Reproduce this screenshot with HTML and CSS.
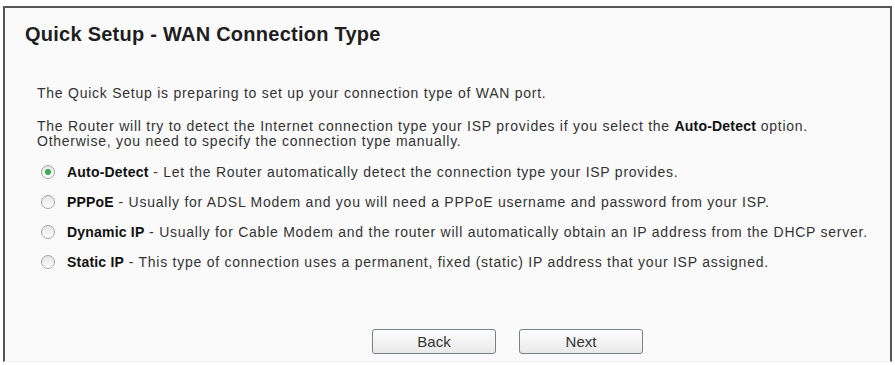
FILE: index.html
```html
<!DOCTYPE html>
<html lang="en">
<head>
    <meta charset="UTF-8">
    <title>Quick Setup - WAN Connection Type</title>
    <link rel="stylesheet" href="styles.css">
</head>
<body>
    <div class="panel">
        <h1 class="title">Quick Setup - WAN Connection Type</h1>

        <div class="content">
            <p class="intro">The Quick Setup is preparing to set up your connection type of WAN port.</p>
            <p class="info">The Router will try to detect the Internet connection type your ISP provides if you select the <b>Auto-Detect</b> option.<br>
            Otherwise, you need to specify the connection type manually.</p>

            <div class="options">
                <label class="option">
                    <input type="radio" name="wan" checked>
                    <span class="dot"></span>
                    <span><b>Auto-Detect</b> - Let the Router automatically detect the connection type your ISP provides.</span>
                </label>
                <label class="option">
                    <input type="radio" name="wan">
                    <span class="dot"></span>
                    <span><b>PPPoE</b> - Usually for ADSL Modem and you will need a PPPoE username and password from your ISP.</span>
                </label>
                <label class="option">
                    <input type="radio" name="wan">
                    <span class="dot"></span>
                    <span><b>Dynamic IP</b> - Usually for Cable Modem and the router will automatically obtain an IP address from the DHCP server.</span>
                </label>
                <label class="option">
                    <input type="radio" name="wan">
                    <span class="dot"></span>
                    <span><b>Static IP</b> - This type of connection uses a permanent, fixed (static) IP address that your ISP assigned.</span>
                </label>
            </div>

            <div class="actions">
                <button type="button">Back</button>
                <button type="button">Next</button>
            </div>
        </div>
    </div>
</body>
</html>
```

FILE: styles.css
```css
body {
    margin: 0;
    padding: 6px 3px 3px 3px;
    background: #ffffff;
    font-family: "Liberation Sans", Arial, sans-serif;
    color: #333;
}
.panel {
    height: 356px;
    box-sizing: border-box;
    border: 2px solid #555;
    border-bottom: 1px solid #eee;
    background-color: #fafafa;
    padding: 0 8px 0 20px;
}
.title {
    margin: 0;
    padding-top: 15px;
    font-size: 20px;
    font-weight: bold;
    color: #1e1e1e;
    letter-spacing: 0.25px;
}
.content {
    padding: 0 0 0 12px;
    font-size: 14px;
    letter-spacing: 0.75px;
}
.content b {
    color: #111;
    letter-spacing: 0.2px;
}
.intro {
    margin: 39px 0 0 0;
}
.info {
    margin: 18px 0 0 0;
    line-height: 15px;
}
.options {
    margin-top: 8px;
    display: flex;
    flex-direction: column;
}
.option {
    display: flex;
    align-items: center;
    gap: 12px;
    height: 30px;
    padding-left: 4px;
    white-space: nowrap;
}
.option input {
    display: none;
}
.dot {
    width: 12px;
    height: 12px;
    flex-shrink: 0;
    border: 1px solid #a4a4a4;
    border-radius: 50%;
    background: linear-gradient(#e4e4e4, #ffffff);
    display: flex;
    align-items: center;
    justify-content: center;
}
.option input:checked + .dot::after {
    content: "";
    width: 6px;
    height: 6px;
    border-radius: 50%;
    background: #3bab4f;
}
.actions {
    display: flex;
    gap: 23px;
    margin-top: 52px;
    padding-left: 335px;
}
button {
    width: 124px;
    height: 25px;
    font-family: "Liberation Sans", Arial, sans-serif;
    font-size: 15px;
    color: #333;
    border: 1px solid #7a8088;
    border-radius: 3px;
    background: linear-gradient(#fdfdfd, #e9e9e9);
    cursor: pointer;
}
```
